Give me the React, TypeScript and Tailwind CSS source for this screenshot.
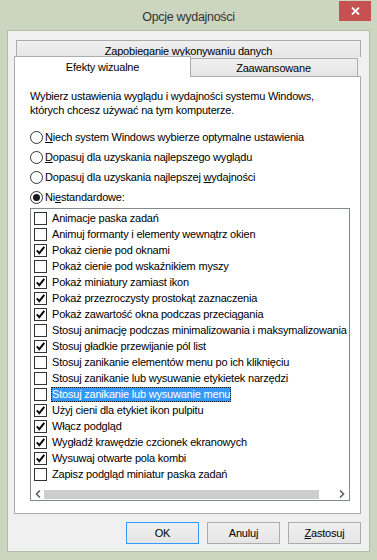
const items = [
  { label: "Animacje paska zadań", checked: false },
  { label: "Animuj formanty i elementy wewnątrz okien", checked: false },
  { label: "Pokaż cienie pod oknami", checked: true },
  { label: "Pokaż cienie pod wskaźnikiem myszy", checked: false },
  { label: "Pokaż miniatury zamiast ikon", checked: true },
  { label: "Pokaż przezroczysty prostokąt zaznaczenia", checked: true },
  { label: "Pokaż zawartość okna podczas przeciągania", checked: true },
  { label: "Stosuj animację podczas minimalizowania i maksymalizowania okien", checked: false },
  { label: "Stosuj gładkie przewijanie pól list", checked: true },
  { label: "Stosuj zanikanie elementów menu po ich kliknięciu", checked: false },
  { label: "Stosuj zanikanie lub wysuwanie etykietek narzędzi", checked: false },
  { label: "Stosuj zanikanie lub wysuwanie menu", checked: false, selected: true },
  { label: "Użyj cieni dla etykiet ikon pulpitu", checked: true },
  { label: "Włącz podgląd", checked: true },
  { label: "Wygładź krawędzie czcionek ekranowych", checked: true },
  { label: "Wysuwaj otwarte pola kombi", checked: true },
  { label: "Zapisz podgląd miniatur paska zadań", checked: false },
];

const Radio = ({ checked, children }: { checked?: boolean; children: React.ReactNode }) => (
  <div className="h-[20px] flex items-center gap-[2px]">
    <span className="w-[13px] h-[13px] rounded-full border border-[#333] bg-white flex items-center justify-center">
      {checked && <span className="w-[7px] h-[7px] rounded-full bg-[#1a1a1a]" />}
    </span>
    <span>{children}</span>
  </div>
);

const Checkbox = ({ checked }: { checked: boolean }) => (
  <span className="w-[13px] h-[13px] shrink-0 border border-[#333] bg-white flex items-center justify-center">
    {checked && (
      <svg width="11" height="11" viewBox="0 0 11 11">
        <polyline points="1.8,5.4 4.3,8.2 9.3,1.8" fill="none" stroke="#000" strokeWidth="1.9" />
      </svg>
    )}
  </span>
);

export default function App() {
  return (
    <div className="w-[377px] h-[560px] bg-[#ccd5bf] flex flex-col font-['Liberation_Sans',sans-serif] text-[11px] tracking-[-0.2px] text-black select-none">
      {/* title bar */}
      <div className="h-[30px] grid grid-cols-[1fr_auto_1fr] items-start">
        <div />
        <div className="pt-[8px] text-[12.5px] tracking-[-0.3px] text-[#333]">Opcje wydajności</div>
        <div className="flex justify-end pr-[6px] pt-[1px]">
          <div className="w-[32px] h-[20px] bg-[#c75050] flex items-center justify-center">
            <svg width="9" height="8" viewBox="0 0 9 8">
              <path d="M1 0.5 L8 7.5 M8 0.5 L1 7.5" stroke="#fff" strokeWidth="1.8" />
            </svg>
          </div>
        </div>
      </div>

      {/* client area */}
      <div className="mx-[7px] h-[522px] border border-[#b3bca6] bg-[#f0f0f0] pl-[6px] pr-[8px] pt-[9px] flex flex-col">
        {/* tabs */}
        <div className="ml-[2px] h-[17px] border-t border-l border-r border-[#acacac] bg-gradient-to-b from-[#f0f0f0] to-[#e5e5e5] flex justify-center pt-[2px]">
          Zapobieganie wykonywaniu danych
        </div>
        <div className="-mt-[1px] h-[20px] flex items-start">
          <div className="relative z-10 w-[177px] h-[21px] bg-white border-t border-l border-r border-[#acacac] flex items-center justify-center">
            Efekty wizualne
          </div>
          <div className="mt-[2px] -ml-px flex-1 mr-[3px] h-[18px] border-t border-r border-[#acacac] bg-gradient-to-b from-[#f0f0f0] to-[#e5e5e5] flex items-center justify-center pt-[1px]">
            Zaawansowane
          </div>
        </div>

        {/* panel */}
        <div className="h-[438px] border border-[#acacac] bg-white pl-[15px] pt-[12px] flex flex-col">
          <p className="leading-[14px]">
            Wybierz ustawienia wyglądu i wydajności systemu Windows,
            <br />
            których chcesz używać na tym komputerze.
          </p>
          <div className="mt-[10px] flex flex-col">
            <Radio>
              <u>N</u>iech system Windows wybierze optymalne ustawienia
            </Radio>
            <Radio>
              <u>D</u>opasuj dla uzyskania najlepszego wyglądu
            </Radio>
            <Radio>
              Dopasuj dla uzyskania najlepszej <u>w</u>ydajności
            </Radio>
            <Radio checked>
              Ni<u>e</u>standardowe:
            </Radio>
          </div>

          {/* list */}
          <div className="mt-[1px] w-[320px] h-[293px] border border-[#828790] bg-white flex flex-col">
            <div className="flex-1 overflow-hidden pt-[1px] pl-[3px]">
              {items.map((it) => (
                <div key={it.label} className="h-[16px] flex items-center gap-[4px] whitespace-nowrap">
                  <Checkbox checked={it.checked} />
                  <span
                    className={
                      it.selected
                        ? "h-[15px] leading-[15px] px-[1px] bg-[#3399ff] text-white outline-1 outline-dotted outline-[#1a1a1a] -outline-offset-1"
                        : "px-[1px]"
                    }
                  >
                    {it.label}
                  </span>
                </div>
              ))}
            </div>
            <div className="h-[17px] flex items-end pb-[1px] bg-white">
              <div className="w-[10px] h-[10px] flex items-center justify-center ml-[2px]">
                <svg width="6" height="8" viewBox="0 0 6 8">
                  <path d="M5 0.5 L1.5 4 L5 7.5" fill="none" stroke="#606060" strokeWidth="1.6" />
                </svg>
              </div>
              <div className="ml-[1px] w-[275px] h-[9px] bg-[#cdcdcd]" />
              <div className="flex-1" />
              <div className="w-[10px] h-[10px] flex items-center justify-center mr-[2px]">
                <svg width="6" height="8" viewBox="0 0 6 8">
                  <path d="M1 0.5 L4.5 4 L1 7.5" fill="none" stroke="#606060" strokeWidth="1.6" />
                </svg>
              </div>
            </div>
          </div>
        </div>

        {/* buttons */}
        <div className="mt-[8px] flex justify-end gap-[8px]">
          <button className="w-[73px] h-[22px] border border-[#3399ff] bg-gradient-to-b from-[#f0f0f0] to-[#e5e5e5]">
            OK
          </button>
          <button className="w-[73px] h-[22px] border border-[#acacac] bg-gradient-to-b from-[#f0f0f0] to-[#e5e5e5]">
            Anuluj
          </button>
          <button className="w-[73px] h-[22px] border border-[#acacac] bg-gradient-to-b from-[#f0f0f0] to-[#e5e5e5]">
            <u>Z</u>astosuj
          </button>
        </div>
      </div>
    </div>
  );
}
